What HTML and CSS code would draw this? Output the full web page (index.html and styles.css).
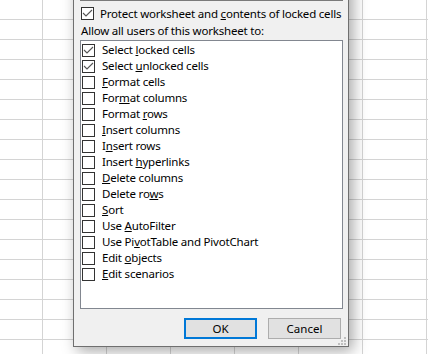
FILE: index.html
```html
<!DOCTYPE html>
<html lang="en">
<head>
<meta charset="UTF-8">
<title>Protect Sheet</title>
<link rel="stylesheet" href="styles.css">
</head>
<body>
<div class="sheet"></div>
<div class="dialog" role="dialog">
 <div class="password"></div>
 <div class="check-row top-check">
  <span class="box checked"><svg viewBox="0 0 13 13"><polyline points="2,6 5,9 11,3"/></svg></span>
  <span>Protect worksheet and <u>c</u>ontents of locked cells</span>
 </div>
 <div class="allow">Allow all users of this worksheet to:</div>
 <div class="list">
  <div class="check-row item"><span class="box checked"><svg viewBox="0 0 13 13"><polyline points="2,6 5,9 11,3"/></svg></span><span>Select <u>l</u>ocked cells</span></div>
  <div class="check-row item"><span class="box checked"><svg viewBox="0 0 13 13"><polyline points="2,6 5,9 11,3"/></svg></span><span>Select <u>u</u>nlocked cells</span></div>
  <div class="check-row item"><span class="box"></span><span><u>F</u>ormat cells</span></div>
  <div class="check-row item"><span class="box"></span><span>For<u>m</u>at columns</span></div>
  <div class="check-row item"><span class="box"></span><span>Format <u>r</u>ows</span></div>
  <div class="check-row item"><span class="box"></span><span><u>I</u>nsert columns</span></div>
  <div class="check-row item"><span class="box"></span><span>I<u>n</u>sert rows</span></div>
  <div class="check-row item"><span class="box"></span><span>Insert <u>h</u>yperlinks</span></div>
  <div class="check-row item"><span class="box"></span><span><u>D</u>elete columns</span></div>
  <div class="check-row item"><span class="box"></span><span>Delete ro<u>w</u>s</span></div>
  <div class="check-row item"><span class="box"></span><span><u>S</u>ort</span></div>
  <div class="check-row item"><span class="box"></span><span>Use <u>A</u>utoFilter</span></div>
  <div class="check-row item"><span class="box"></span><span>Use Pi<u>v</u>otTable and PivotChart</span></div>
  <div class="check-row item"><span class="box"></span><span>Edit <u>o</u>bjects</span></div>
  <div class="check-row item"><span class="box"></span><span><u>E</u>dit scenarios</span></div>
 </div>
 <div class="buttons">
  <button class="btn default">OK</button>
  <button class="btn">Cancel</button>
 </div>
 <svg class="grip" viewBox="0 0 8 8" width="8" height="8">
  <rect x="6" y="0" width="2" height="2"/>
  <rect x="3" y="3" width="2" height="2"/><rect x="6" y="3" width="2" height="2"/>
  <rect x="0" y="6" width="2" height="2"/><rect x="3" y="6" width="2" height="2"/><rect x="6" y="6" width="2" height="2"/>
 </svg>
</div>
</body>
</html>
```

FILE: styles.css
```css
body{margin:0;background:#fff;font-family:"Noto Sans",sans-serif;font-size:11.5px;letter-spacing:-.2px;color:#000;overflow:hidden}
.sheet{height:354px;background-image:linear-gradient(to bottom,transparent 19px,#d4d4d4 19px),linear-gradient(to right,transparent 63px,#d4d4d4 63px);background-size:100% 20px,64px 100%;background-position:0 0,-21px 0}
.dialog{position:absolute;left:73px;top:-24px;width:276px;box-sizing:border-box;background:#f0f0f0;border:1px solid #6f6f6f;padding:0 5px 7px 6px;box-shadow:4px 4px 14px rgba(0,0,0,.35)}
.password{height:24px;box-sizing:border-box;border:1px solid #7a7a7a;border-top:0;background:#fff}
.check-row{display:flex;align-items:center;white-space:nowrap}
.box{width:13px;height:13px;box-sizing:border-box;border:1px solid #333;background:#fff;flex:none;position:relative}
.box svg{position:absolute;left:-1px;top:-1px;width:13px;height:13px}
.box polyline{fill:none;stroke:#555;stroke-width:1.1}
.top-check{margin:6px 0 0 1px;height:13px;gap:6px}
.allow{margin-top:3px;line-height:16px;padding-left:1px}
.list{margin-top:1px;height:269px;box-sizing:border-box;border:1px solid #828790;background:#fff;padding:2px 0 0 1px}
.item{height:16px;align-items:flex-start;gap:7px}
.item .box{margin-top:1px}
.item span:last-child{line-height:14px}
.buttons{display:flex;justify-content:flex-end;gap:11px;margin-top:9px;padding-right:2px}
.btn{width:73px;height:21px;box-sizing:border-box;border:1px solid #adadad;background:#e1e1e1;font:inherit;color:#000;padding:0}
.btn.default{border:2px solid #0078d7}
.grip{position:absolute;right:2px;bottom:1px;fill:#bfbfbf}
```
